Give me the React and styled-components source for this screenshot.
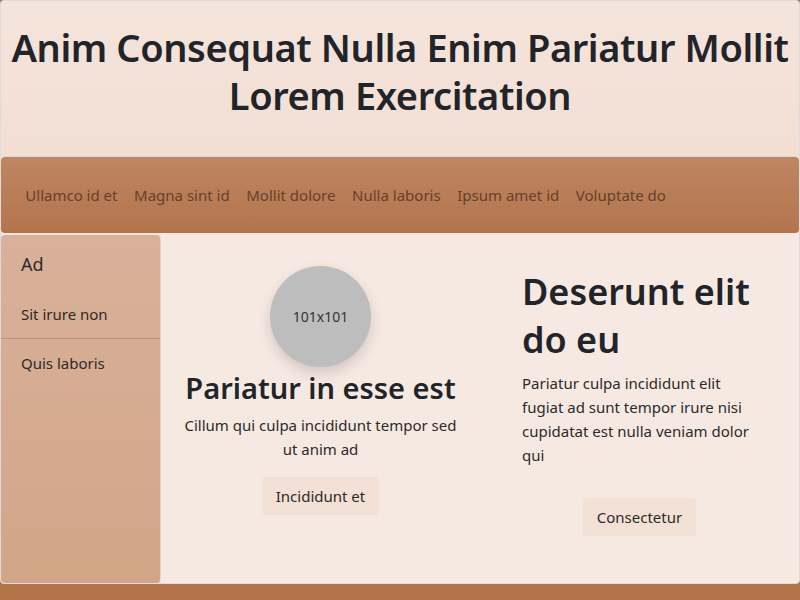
import React from "react";
import styled, { createGlobalStyle } from "styled-components";

const Global = createGlobalStyle`
  html, body { margin: 0; padding: 0; }
  body {
    background: #b37449;
    font-family: "Noto Sans", "Open Sans", sans-serif;
    color: #212529;
  }
  * { box-sizing: border-box; }
`;

const Page = styled.div`
  width: 800px;
  height: 584px;
  background: #f6e9e2;
  border: 1px solid #dcdcdc;
  border-radius: 4px;
  display: flex;
  flex-direction: column;
  overflow: hidden;
`;

const Header = styled.header`
  height: 156px;
  background: linear-gradient(180deg, #f5e4db, #f2dfd4);
  border-bottom: 1px solid #d6d6d6;
  border-radius: 4px;
  padding: 22px 4px 0;
  text-align: center;
`;

const Title = styled.h1`
  margin: 0;
  font-size: 38px;
  line-height: 48px;
  font-weight: 600;
  letter-spacing: -0.4px;
  color: #212529;
`;

const Nav = styled.nav`
  height: 76px;
  background: linear-gradient(180deg, #be8664, #b3744b);
  border-radius: 4px;
  display: flex;
  align-items: center;
  padding-left: 16px;
`;

const NavItem = styled.a`
  padding: 0 8.3px;
  font-size: 15px;
  color: #64412d;
  text-decoration: none;
`;

const Main = styled.div`
  flex: 1;
  display: flex;
  margin-top: 2px;
`;

const Sidebar = styled.aside`
  width: 160px;
  background: linear-gradient(180deg, #d9b19a, #d2a587);
  border-radius: 4px;
  border-right: 1px solid #e4d3c8;
  display: flex;
  flex-direction: column;
`;

const SideHead = styled.div`
  padding: 16px 20px 12px;
  font-size: 18px;
  line-height: 27px;
  color: #2b2b2b;
`;

const SideItem = styled.div`
  padding: 12px 20px;
  font-size: 15px;
  line-height: 24px;
  color: #2b2b2b;
  border-bottom: ${(p) => (p.$divider ? "1px solid #c1927a" : "none")};
`;

const Content = styled.section`
  flex: 1;
  display: grid;
  grid-template-columns: 1fr 1fr;
  column-gap: 40px;
  padding: 20px;
`;

const Col = styled.div`
  display: flex;
  flex-direction: column;
  align-items: ${(p) => (p.$center ? "center" : "stretch")};
  text-align: ${(p) => (p.$center ? "center" : "left")};
  padding: ${(p) => (p.$center ? "0" : "0 22px")};
`;

const Avatar = styled.div`
  width: 101px;
  height: 101px;
  border-radius: 50%;
  background: #bdbdbd;
  margin-top: 11px;
  display: flex;
  align-items: center;
  justify-content: center;
  font-size: 14px;
  color: #333;
  box-shadow: 0 6px 14px rgba(0, 0, 0, 0.15);
`;

const CardTitle = styled.h2`
  margin: 4px 0 8px;
  font-size: 29px;
  line-height: 34px;
  font-weight: 600;
`;

const BigTitle = styled.h2`
  margin: 13px 0 7px;
  font-size: 36px;
  line-height: 48px;
  font-weight: 600;
`;

const Text = styled.p`
  margin: 0;
  font-size: 15px;
  line-height: 24px;
  color: #2b2b2b;
`;

const Button = styled.button`
  margin-top: ${(p) => p.$mt}px;
  align-self: center;
  background: #f3e1d6;
  border: none;
  border-radius: 4px;
  padding: 8px 14px;
  font-family: inherit;
  font-size: 15px;
  line-height: 22px;
  color: #2b2b2b;
`;

const navItems = [
  "Ullamco id et",
  "Magna sint id",
  "Mollit dolore",
  "Nulla laboris",
  "Ipsum amet id",
  "Voluptate do",
];

export default function App() {
  return (
    <>
      <Global />
      <Page>
        <Header>
          <Title>Anim Consequat Nulla Enim Pariatur Mollit Lorem Exercitation</Title>
        </Header>
        <Nav>
          {navItems.map((n) => (
            <NavItem key={n}>{n}</NavItem>
          ))}
        </Nav>
        <Main>
          <Sidebar>
            <SideHead>Ad</SideHead>
            <SideItem $divider>Sit irure non</SideItem>
            <SideItem>Quis laboris</SideItem>
          </Sidebar>
          <Content>
            <Col $center>
              <Avatar>101x101</Avatar>
              <CardTitle>Pariatur in esse est</CardTitle>
              <Text>Cillum qui culpa incididunt tempor sed ut anim ad</Text>
              <Button $mt={16}>Incididunt et</Button>
            </Col>
            <Col>
              <BigTitle>Deserunt elit do eu</BigTitle>
              <Text>
                Pariatur culpa incididunt elit fugiat ad sunt tempor irure nisi
                cupidatat est nulla veniam dolor qui
              </Text>
              <Button $mt={31}>Consectetur</Button>
            </Col>
          </Content>
        </Main>
      </Page>
    </>
  );
}
